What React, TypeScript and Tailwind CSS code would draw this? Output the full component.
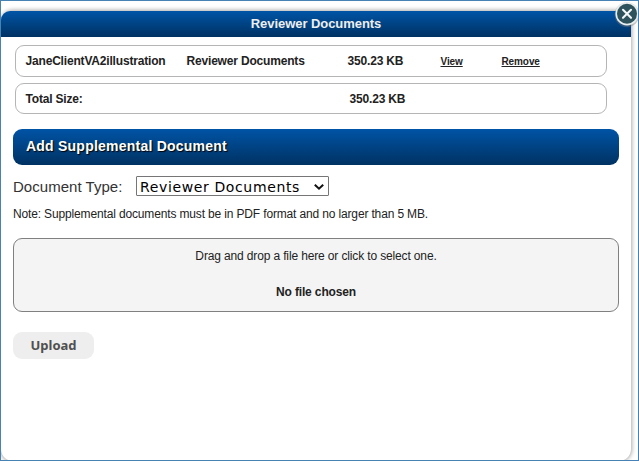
import React from "react";

function CloseButton() {
  return (
    <button aria-label="Close" className="absolute top-0 right-[-3px] h-7 w-7">
      <svg viewBox="0 0 28 28" className="h-7 w-7">
        <circle cx="14" cy="13.8" r="12.4" fill="#777" opacity="0.4" />
        <circle cx="14" cy="12.8" r="11.6" fill="#e9eeee" />
        <circle cx="14" cy="12.8" r="10" fill="#2e535c" />
        <path d="M10 8.8l8 8M18 8.8l-8 8" stroke="#f4f8f8" strokeWidth="2.1" strokeLinecap="round" />
      </svg>
    </button>
  );
}

function DocumentRow() {
  return (
    <div className="flex h-8 items-center rounded-[9px] border border-[#b5b5b5] pl-[9.5px] font-bold tracking-[-0.18px]">
      <span className="w-[161px]">JaneClientVA2illustration</span>
      <span className="w-[161px]">Reviewer Documents</span>
      <span className="w-[93px]">350.23 KB</span>
      <a className="w-[61px] text-[10px] tracking-[-0.1px] underline">View</a>
      <a className="text-[10px] tracking-[-0.1px] underline">Remove</a>
    </div>
  );
}

export default function App() {
  return (
    <div className="relative h-[461px] w-[639px] overflow-hidden border border-[#4682b4] bg-white pt-[10px] font-['Liberation_Sans',Arial,sans-serif] text-[12px] text-[#222]">
      <main className="h-[450px] w-[630px] rounded-[12px] bg-white shadow-[0_0_4px_1px_#aaa]">
        <header className="flex h-[26px] items-center justify-center rounded-tl-[9px] bg-linear-to-b from-[#0054a6] to-[#003263] pb-[1px] text-[13px] font-bold tracking-[-0.05px] text-[#eee]">
          Reviewer Documents
        </header>
        <section className="flex flex-col gap-[6px] pt-2 pr-[24px] pl-[14px]">
          <DocumentRow />
          <div className="flex h-[31px] items-center rounded-[9px] border border-[#b5b5b5] pl-[9.5px] font-bold tracking-[-0.18px]">
            <span className="w-[324px]">Total Size:</span>
            <span>350.23 KB</span>
          </div>
        </section>
        <section className="px-3 pt-[15px]">
          <h2 className="flex h-9 items-center rounded-[9px] bg-linear-to-b from-[#0054a6] to-[#003263] pb-[2px] pl-[13px] text-[14px] font-bold tracking-[0.23px] text-white [text-shadow:1px_1px_1px_#000]">
            Add Supplemental Document
          </h2>
          <div className="flex h-[31px] items-end">
            <label className="w-[123px] text-[15px] leading-[19px] tracking-[0.03px] text-[#333]">Document Type:</label>
            <button className="flex h-5 w-[193px] items-center justify-between rounded-[1px] border border-[#767676] pr-[3px] pl-[3px] pt-[1px] font-['DejaVu_Sans',Verdana,sans-serif] text-[14px] leading-[18px] tracking-[0.63px] text-black">
              <span className="whitespace-nowrap">Reviewer Documents</span>
              <svg viewBox="0 0 12 8" className="h-2 w-3 shrink-0">
                <path d="M1.8 1.7L6 5.7l4.2-4" fill="none" stroke="#111" strokeWidth="2" />
              </svg>
            </button>
          </div>
          <p className="pt-[10px] leading-4 tracking-[-0.15px]">Note: Supplemental documents must be in PDF format and no larger than 5 MB.</p>
          <div className="mt-4 flex h-[74px] flex-col items-center gap-5 rounded-[9px] border border-[#808080] bg-[#f4f4f4] pt-[9px] leading-4 tracking-[-0.14px]">
            <p>Drag and drop a file here or click to select one.</p>
            <p className="font-bold">No file chosen</p>
          </div>
          <button className="mt-5 flex h-[27px] w-[81px] items-center justify-center rounded-[9px] bg-[#eee] pt-[1px] font-['Noto_Sans','Open_Sans',sans-serif] text-[13px] font-bold text-[#505050]">
            Upload
          </button>
        </section>
      </main>
      <CloseButton />
    </div>
  );
}
